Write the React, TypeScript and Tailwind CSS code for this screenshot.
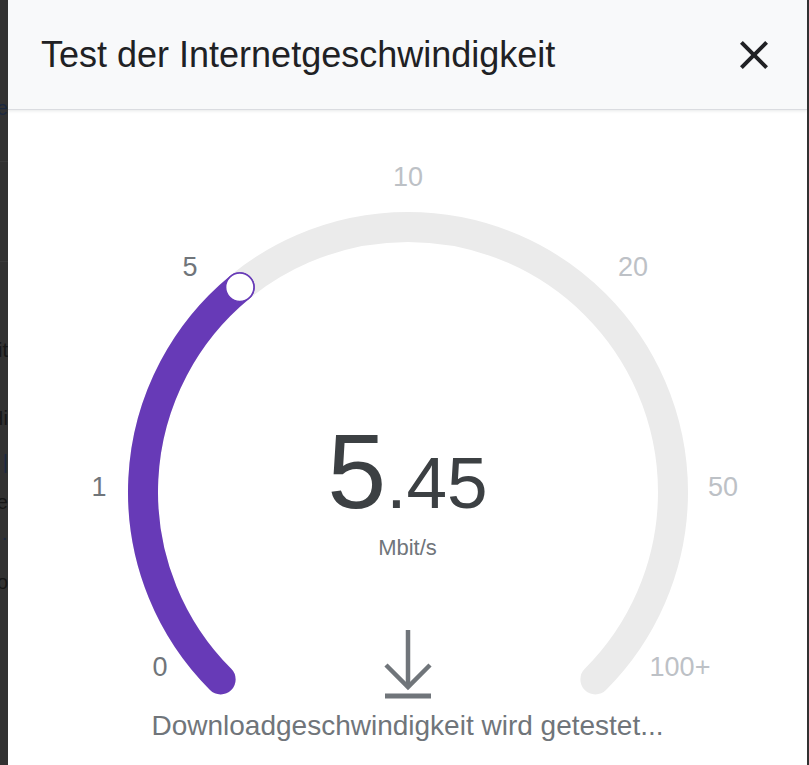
import React from 'react';

const PURPLE = '#673ab7';
const TRACK = '#ebebeb';

// gauge geometry, in page pixels
const CX = 408;
const CY = 492;
const R = 265;

const speed = 5.45;

// scale stops: value -> angle (deg, counter clockwise from 3 o'clock)
const stops = [
  { value: 0, angle: 225, label: '0', x: 160, y: 667 },
  { value: 1, angle: 180, label: '1', x: 99, y: 487 },
  { value: 5, angle: 135, label: '5', x: 190, y: 267 },
  { value: 10, angle: 90, label: '10', x: 408, y: 177 },
  { value: 20, angle: 45, label: '20', x: 633, y: 267 },
  { value: 50, angle: 0, label: '50', x: 723, y: 487 },
  { value: 100, angle: -45, label: '100+', x: 680, y: 667 },
];

const polar = (deg: number) => {
  const a = (deg * Math.PI) / 180;
  return [CX + R * Math.cos(a), CY - R * Math.sin(a)];
};

// linear up to 1, log between the later stops
const angleFor = (v: number) => {
  for (let i = 0; i < stops.length - 1; i++) {
    const a = stops[i];
    const b = stops[i + 1];
    if (v >= a.value && v <= b.value) {
      const t = a.value === 0 ? v / b.value : Math.log(v / a.value) / Math.log(b.value / a.value);
      return a.angle + (b.angle - a.angle) * t;
    }
  }
  return -45;
};

const arc = (from: number, to: number) => {
  const [x1, y1] = polar(from);
  const [x2, y2] = polar(to);
  const large = from - to > 180 ? 1 : 0;
  return `M ${x1} ${y1} A ${R} ${R} 0 ${large} 1 ${x2} ${y2}`;
};

const Gauge: React.FC = () => {
  const needle = angleFor(speed);
  const [kx, ky] = polar(needle);

  return (
    <svg className="absolute inset-0 h-full w-full" viewBox="8 110 799 655">
      <path d={arc(225, -45)} fill="none" stroke={TRACK} strokeWidth={30} strokeLinecap="round" />
      <path d={arc(225, needle)} fill="none" stroke={PURPLE} strokeWidth={30} strokeLinecap="round" />
      <circle cx={kx} cy={ky} r={14.2} fill="#fff" stroke={PURPLE} strokeWidth={1.6} />
      {stops.map(s => (
        <text
          key={s.label}
          x={s.x}
          y={s.y}
          textAnchor="middle"
          dominantBaseline="central"
          fontFamily="Liberation Sans, Arial, sans-serif"
          fontSize={27}
          fill={s.value <= speed ? '#70757a' : '#bdc1c6'}
        >
          {s.label}
        </text>
      ))}
    </svg>
  );
};

const DownloadIcon: React.FC = () => (
  <svg width="50" height="70" viewBox="0 0 50 70" fill="none" stroke="#70757a" strokeWidth={4.5}>
    <path d="M25 0 V57" />
    <path d="M3 35 L25 57 L47 35" />
    <path d="M2 66 H48" strokeWidth={5} />
  </svg>
);

// dimmed page peeking out at the left of the dialog
const behind = [
  { h: 'h-[96px]', text: '', cls: '' },
  { h: 'h-[24px]', text: 'Seite', cls: 'text-[#1b2840]' },
  { h: 'h-[42px]', text: '', cls: 'border-b border-[#3b3b3b]' },
  { h: 'h-[100px]', text: '', cls: 'border-b border-[#3b3b3b]' },
  { h: 'h-[76px]', text: '', cls: '' },
  { h: 'h-[24px]', text: 'Zeit', cls: 'text-[#161616]' },
  { h: 'h-[44px]', text: '', cls: '' },
  { h: 'h-[24px]', text: 'Hi', cls: 'text-[#161616]' },
  { h: 'h-[20px]', text: '', cls: '' },
  { h: 'h-[24px]', text: '|', cls: 'text-[#1b2840]' },
  { h: 'h-[16px]', text: '', cls: '' },
  { h: 'h-[24px]', text: 'Seite', cls: 'text-[#161616]' },
  { h: 'h-[12px]', text: '', cls: '' },
  { h: 'h-[22px]', text: '·', cls: 'text-[#1b2840]' },
  { h: 'h-[22px]', text: '', cls: '' },
  { h: 'h-[24px]', text: 'Info', cls: 'text-[#161616]' },
];

export default function App() {
  return (
    <div className="flex h-[765px] w-full overflow-hidden bg-[#323232] font-['Liberation_Sans',Arial,sans-serif]">
      <div className="flex w-[8px] shrink-0 flex-col overflow-hidden">
        {behind.map((row, i) => (
          <div key={i} className={`flex shrink-0 items-center justify-end text-[20px] leading-none whitespace-nowrap ${row.h} ${row.cls}`}>
            {row.text}
          </div>
        ))}
      </div>

      <div className="flex flex-1 flex-col bg-white">
        <header className="relative z-10 flex h-[110px] shrink-0 items-center justify-between border-b border-[#dadce0] bg-[#f8f9fa] pr-[29px] pl-[33px] shadow-[0_1px_3px_rgba(60,64,67,0.12)]">
          <h1 className="text-[36px] leading-none text-[#202124]">Test der Internetgeschwindigkeit</h1>
          <svg width="48" height="48" viewBox="0 0 24 24" fill="#202124">
            <path d="M19 6.41L17.59 5 12 10.59 6.41 5 5 6.41 10.59 12 5 17.59 6.41 19 12 13.41 17.59 19 19 17.59 13.41 12z" />
          </svg>
        </header>

        <main className="relative flex-1">
          <Gauge />
          <div className="relative flex flex-col items-center pt-[308px]">
            <div className="leading-none text-[#3c4043]">
              <span className="text-[106px]">5</span>
              <span className="text-[73px]">.45</span>
            </div>
            <div className="mt-[13px] text-[22px] leading-none text-[#70757a]">Mbit/s</div>
            <div className="mt-[71px]">
              <DownloadIcon />
            </div>
            <p className="mt-[12px] text-[28px] leading-none text-[#70757a]">Downloadgeschwindigkeit wird getestet...</p>
          </div>
        </main>
      </div>

      <div className="w-[2px] shrink-0" />
    </div>
  );
}
